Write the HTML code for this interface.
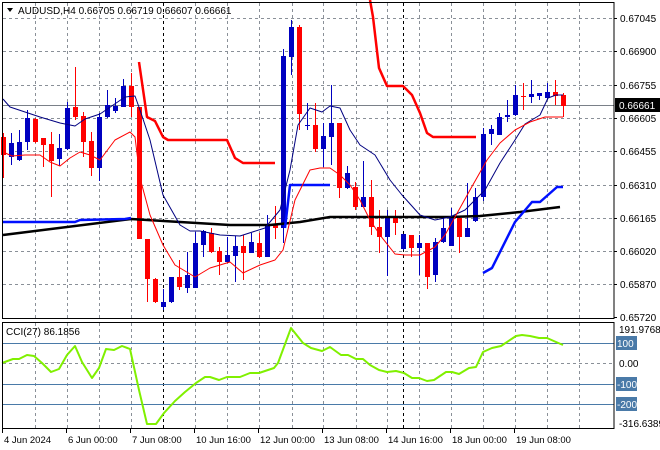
<!DOCTYPE html><html><head><style>body{margin:0;background:#fff}svg{display:block}text{font-family:"Liberation Sans",sans-serif;font-size:10px;fill:#000}</style></head><body>
<svg width="660" height="450" xmlns="http://www.w3.org/2000/svg">
<g id="grid" stroke="#8a9098" stroke-dasharray="3,3" stroke-width="1">
</g>
<script>
(function(){
var ns="http://www.w3.org/2000/svg",svg=document.querySelector('svg'),g=document.getElementById('grid');
function el(t,a,p){var e=document.createElementNS(ns,t);for(var k in a)e.setAttribute(k,a[k]);(p||svg).appendChild(e);return e;}
var vx=[35,67,99,131,195,227,259,292,323,356,387,419,451,483,515,547,579];
vx.forEach(function(x){el('line',{x1:x+.5,y1:3,x2:x+.5,y2:318},g);el('line',{x1:x+.5,y1:323,x2:x+.5,y2:428},g);});
[163,403].forEach(function(x){el('line',{x1:x+.5,y1:3,x2:x+.5,y2:318,stroke:'#000'},g);el('line',{x1:x+.5,y1:323,x2:x+.5,y2:428,stroke:'#000'},g);});
[18,51,85,118,151,185,218,251,284].forEach(function(y){el('line',{x1:3,y1:y+.5,x2:614,y2:y+.5},g);});
el('line',{x1:3,y1:363.5,x2:614,y2:363.5},g);
el('line',{x1:3,y1:105.5,x2:614,y2:105.5,stroke:'#7a8088'});
[343,384,404].forEach(function(y){el('line',{x1:3,y1:y+.5,x2:614,y2:y+.5,stroke:'#4a7aa8'});});
var C=[[3,137,155,133,178,'r'],[11,143,157,133,165,'b'],[19,142,160,130,161,'b'],[27,118,142,110,150,'b'],[35,119,142,118,143,'r'],[43,138,145,138,167,'r'],[51,144,161,132,197,'r'],[59,148,159,134,166,'b'],[67,108,149,102,150,'b'],[75,107,117,67,120,'r'],[83,116,142,112,157,'r'],[91,141,168,132,176,'r'],[99,117,168,113,181,'b'],[107,105,117,90,118,'b'],[115,106,111,98,113,'b'],[123,86,107,79,107,'b'],[131,86,107,73,117,'r'],[139,107,239,107,239,'r'],[147,239,279,239,302,'r'],[155,279,302,278,303,'r'],[163,302,307,289,310,'b'],[171,277,302,277,303,'b'],[179,277,287,260,290,'r'],[187,275,288,252,293,'b'],[195,243,288,232,288,'b'],[203,231,245,230,257,'b'],[211,233,252,228,253,'r'],[219,251,262,247,275,'r'],[227,255,262,237,263,'b'],[235,246,256,236,282,'b'],[243,246,253,235,280,'r'],[251,242,253,233,253,'b'],[259,243,257,233,258,'r'],[267,226,257,215,257,'b'],[275,225,228,206,239,'r'],[283,56,228,49,243,'b'],[291,27,57,20,75,'b'],[299,27,114,25,130,'r'],[307,125,126,103,130,'b'],[315,125,149,103,152,'r'],[323,136,149,123,167,'b'],[331,123,137,85,165,'b'],[339,123,188,123,198,'r'],[347,173,188,166,189,'b'],[355,187,207,182,210,'r'],[363,197,207,161,207,'b'],[371,197,227,180,235,'r'],[379,227,237,210,253,'r'],[387,217,237,210,276,'b'],[395,217,223,210,235,'r'],[403,234,249,234,250,'b'],[411,235,248,235,257,'r'],[419,243,248,235,275,'b'],[427,243,277,243,289,'r'],[435,242,275,238,282,'b'],[443,228,242,218,243,'b'],[451,218,246,208,246,'b'],[459,218,237,217,253,'r'],[467,228,237,183,237,'b'],[475,197,221,188,222,'b'],[483,134,197,128,201,'b'],[491,129,134,125,145,'b'],[499,117,135,113,135,'b'],[507,115,117,100,122,'b'],[515,95,115,85,116,'b'],[523,96,97,83,110,'r'],[531,94,97,80,103,'b'],[539,93,96,93,100,'b'],[547,92,98,83,100,'b'],[555,92,96,80,105,'r'],[563,95,106,93,117,'r']];
C.forEach(function(c){var col=c[5]=='r'?'#ff0000':'#0000c0';el('line',{x1:c[0]+.5,y1:c[3],x2:c[0]+.5,y2:c[4],stroke:col});el('rect',{x:c[0]-2,y:c[1],width:5,height:Math.max(1,c[2]-c[1]),fill:col});});
function pl(p,col,w){el('polyline',{points:p,fill:'none',stroke:col,'stroke-width':w,'stroke-linejoin':'round'});}
pl('3,235 131,219 180,222 230,225 270,225 300,222 330,217 450,217 480,216 520,212 560,207','#000',2.5);
pl('3,222 75,222 80,220 125,219 131,218','#0010ff',2.5);
pl('285,228 290,185 330,185','#0010ff',2.5);
pl('483,273 492,268 515,222 532,202 540,202 557,187 563,187','#0010ff',2.5);
pl('139,62 147,117 155,121 163,137 168,140 227,140 235,158 243,163 275,163','#ff0000',2.5);
pl('370,0 373,17 379,68 387,86 403,86 412,95 420,113 427,133 433,137 476,137','#ff0000',2.5);
pl('3,99 10,107 25,112 40,117 60,123 75,126 85,119 100,114 125,97 135,96 140,110 150,140 163,195 180,225 190,231 200,231 220,235 240,236 265,228 280,210 290,170 298,125 310,108 322,112 330,106 340,108 350,130 360,145 375,155 390,180 402,195 420,215 435,220 450,217 465,210 485,190 500,163 515,140 525,124 540,115 548,98 556,95 563,95','#000080',1);
pl('3,152 12,156 25,155 40,155 50,162 60,166 70,158 80,152 90,155 100,160 115,140 130,132 135,137 140,178 150,215 163,245 175,265 195,277 210,268 230,262 243,273 260,265 275,260 283,250 295,200 310,170 320,168 330,168 340,175 350,185 360,200 370,220 380,235 395,254 405,255 420,255 435,247 445,235 455,217 470,190 487,160 500,143 515,130 530,122 545,117 563,117','#ff0000',1);
pl('2,363 13,359 19,359 27,355 34,356 42,363 51,372 59,369 67,355 75,346 82,362 92,378 99,368 106,349 114,350 122,346 130,349 139,390 147,424 156,424 164,413 175,401 185,392 196,383 205,377 210,377 219,380 227,377 240,377 250,373 259,373 274,368 278,363 291,328 303,343 311,348 322,351 330,347 341,355 348,355 356,359 363,359 370,365 379,370 387,372 396,371 404,373 412,378 419,378 427,381 434,380 446,372 452,372 459,374 469,368 476,367 483,352 492,348 501,346 516,336 522,335 530,336 539,338 547,338 556,342 563,345','#80f000',2);
el('rect',{x:2.5,y:2.5,width:611.5,height:316,fill:'none',stroke:'#000'});
el('rect',{x:2.5,y:322.5,width:611.5,height:106,fill:'none',stroke:'#000'});
var P=[[18,'0.67045'],[51,'0.66900'],[85,'0.66755'],[118,'0.66605'],[151,'0.66455'],[185,'0.66310'],[218,'0.66165'],[251,'0.66020'],[284,'0.65870'],[317,'0.65720']];
P.forEach(function(p){el('line',{x1:614,y1:p[0]+.5,x2:617,y2:p[0]+.5,stroke:'#000'});var t=el('text',{x:620,y:p[0]+4});t.textContent=p[1];});
el('rect',{x:615,y:98,width:45,height:14,fill:'#000'});
var t=el('text',{x:619,y:109,style:'fill:#fff'});t.textContent='0.66661';
t=el('text',{x:619,y:333});t.textContent='191.9768';
t=el('text',{x:619,y:427});t.textContent='-316.6389';
t=el('text',{x:619,y:367});t.textContent='0.00';
[[343,'100'],[384,'-100'],[404,'-200']].forEach(function(l){el('rect',{x:616,y:l[0]-7,width:21,height:14,fill:'#4a7aa8'});var t=el('text',{x:617,y:l[0]+4,style:'fill:#fff'});t.textContent=l[1];});
el('path',{d:'M7,8 L13,8 L10,12 Z',fill:'#000'});
t=el('text',{x:18,y:14});t.textContent='AUDUSD,H4  0.66705 0.66719 0.66607 0.66661';
t=el('text',{x:6,y:335});t.textContent='CCI(27) 86.1856';
[[2,'4 Jun 2024'],[66,'6 Jun 00:00'],[130,'7 Jun 08:00'],[194,'10 Jun 16:00'],[258,'12 Jun 00:00'],[322,'13 Jun 08:00'],[386,'14 Jun 16:00'],[450,'18 Jun 00:00'],[514,'19 Jun 08:00']].forEach(function(l){el('line',{x1:l[0]+.5,y1:429,x2:l[0]+.5,y2:433,stroke:'#000'});var t=el('text',{x:l[0]+2,y:443,style:'font-size:9.5px'});t.textContent=l[1];});
})();
</script>
</svg></body></html>
